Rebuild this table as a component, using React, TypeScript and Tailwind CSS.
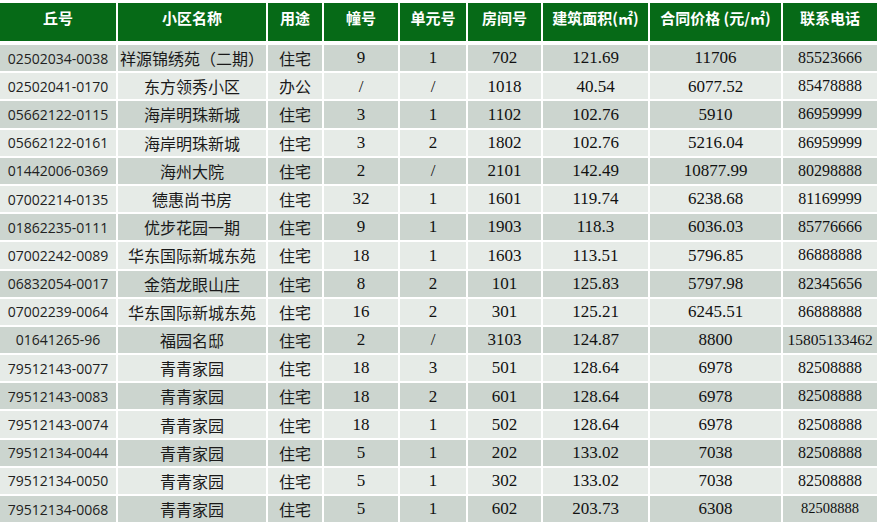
const headers = [
  "丘号",
  "小区名称",
  "用途",
  "幢号",
  "单元号",
  "房间号",
  "建筑面积(㎡)",
  "合同价格 (元/㎡)",
  "联系电话",
];

const rows = [
  ["02502034-0038", "祥源锦绣苑（二期）", "住宅", "9", "1", "702", "121.69", "11706", "85523666"],
  ["02502041-0170", "东方领秀小区", "办公", "/", "/", "1018", "40.54", "6077.52", "85478888"],
  ["05662122-0115", "海岸明珠新城", "住宅", "3", "1", "1102", "102.76", "5910", "86959999"],
  ["05662122-0161", "海岸明珠新城", "住宅", "3", "2", "1802", "102.76", "5216.04", "86959999"],
  ["01442006-0369", "海州大院", "住宅", "2", "/", "2101", "142.49", "10877.99", "80298888"],
  ["07002214-0135", "德惠尚书房", "住宅", "32", "1", "1601", "119.74", "6238.68", "81169999"],
  ["01862235-0111", "优步花园一期", "住宅", "9", "1", "1903", "118.3", "6036.03", "85776666"],
  ["07002242-0089", "华东国际新城东苑", "住宅", "18", "1", "1603", "113.51", "5796.85", "86888888"],
  ["06832054-0017", "金箔龙眼山庄", "住宅", "8", "2", "101", "125.83", "5797.98", "82345656"],
  ["07002239-0064", "华东国际新城东苑", "住宅", "16", "2", "301", "125.21", "6245.51", "86888888"],
  ["01641265-96", "福园名邸", "住宅", "2", "/", "3103", "124.87", "8800", "15805133462"],
  ["79512143-0077", "青青家园", "住宅", "18", "3", "501", "128.64", "6978", "82508888"],
  ["79512143-0083", "青青家园", "住宅", "18", "2", "601", "128.64", "6978", "82508888"],
  ["79512143-0074", "青青家园", "住宅", "18", "1", "502", "128.64", "6978", "82508888"],
  ["79512134-0044", "青青家园", "住宅", "5", "1", "202", "133.02", "7038", "82508888"],
  ["79512134-0050", "青青家园", "住宅", "5", "1", "302", "133.02", "7038", "82508888"],
  ["79512134-0068", "青青家园", "住宅", "5", "1", "602", "203.73", "6308", "82508888"],
];

const cols = "grid grid-cols-[116px_148px_54px_74px_66px_73px_105px_131px_94px] gap-x-[2px]";

export default function App() {
  return (
    <div className="w-[880px] h-[525px] overflow-hidden bg-white pt-[3px]">
      <div className={`${cols} h-[38px]`}>
        {headers.map((h) => (
          <div
            key={h}
            className="bg-[#066a17] pt-[5px] text-center text-[15px] leading-[20px] font-bold text-white font-['Noto_Sans_CJK_SC',sans-serif] whitespace-nowrap"
          >
            {h}
          </div>
        ))}
      </div>

      <div className="mt-[4px] flex flex-col gap-y-[2px]">
        {rows.map((r, i) => (
          <div
            key={r[0]}
            className={`${cols} h-[26.2px] ${i % 2 === 0 ? "[&>div]:bg-[#ccd5cf]" : "[&>div]:bg-[#e6ebe7]"}`}
          >
            <div className="flex items-center justify-center text-[14px] text-[#222] font-['Open_Sans',sans-serif]">
              {r[0]}
            </div>
            <div className="flex items-center justify-center text-[16px] text-[#1a1a1a] font-['Noto_Sans_CJK_SC',sans-serif] whitespace-nowrap">
              {r[1]}
            </div>
            <div className="flex items-center justify-center text-[16px] text-[#1a1a1a] font-['Noto_Sans_CJK_SC',sans-serif]">
              {r[2]}
            </div>
            {r.slice(3, 8).map((v, j) => (
              <div
                key={j}
                className="flex items-center justify-center text-[17px] text-[#111] font-['Liberation_Serif',serif]"
              >
                {v}
              </div>
            ))}
            <div
              className={`flex items-center justify-center text-[#111] font-['Liberation_Serif',serif] ${
                r[8].length > 8 ? "text-[15.5px]" : i === rows.length - 1 ? "text-[14.5px]" : "text-[16px]"
              }`}
            >
              {r[8]}
            </div>
          </div>
        ))}
      </div>
    </div>
  );
}
